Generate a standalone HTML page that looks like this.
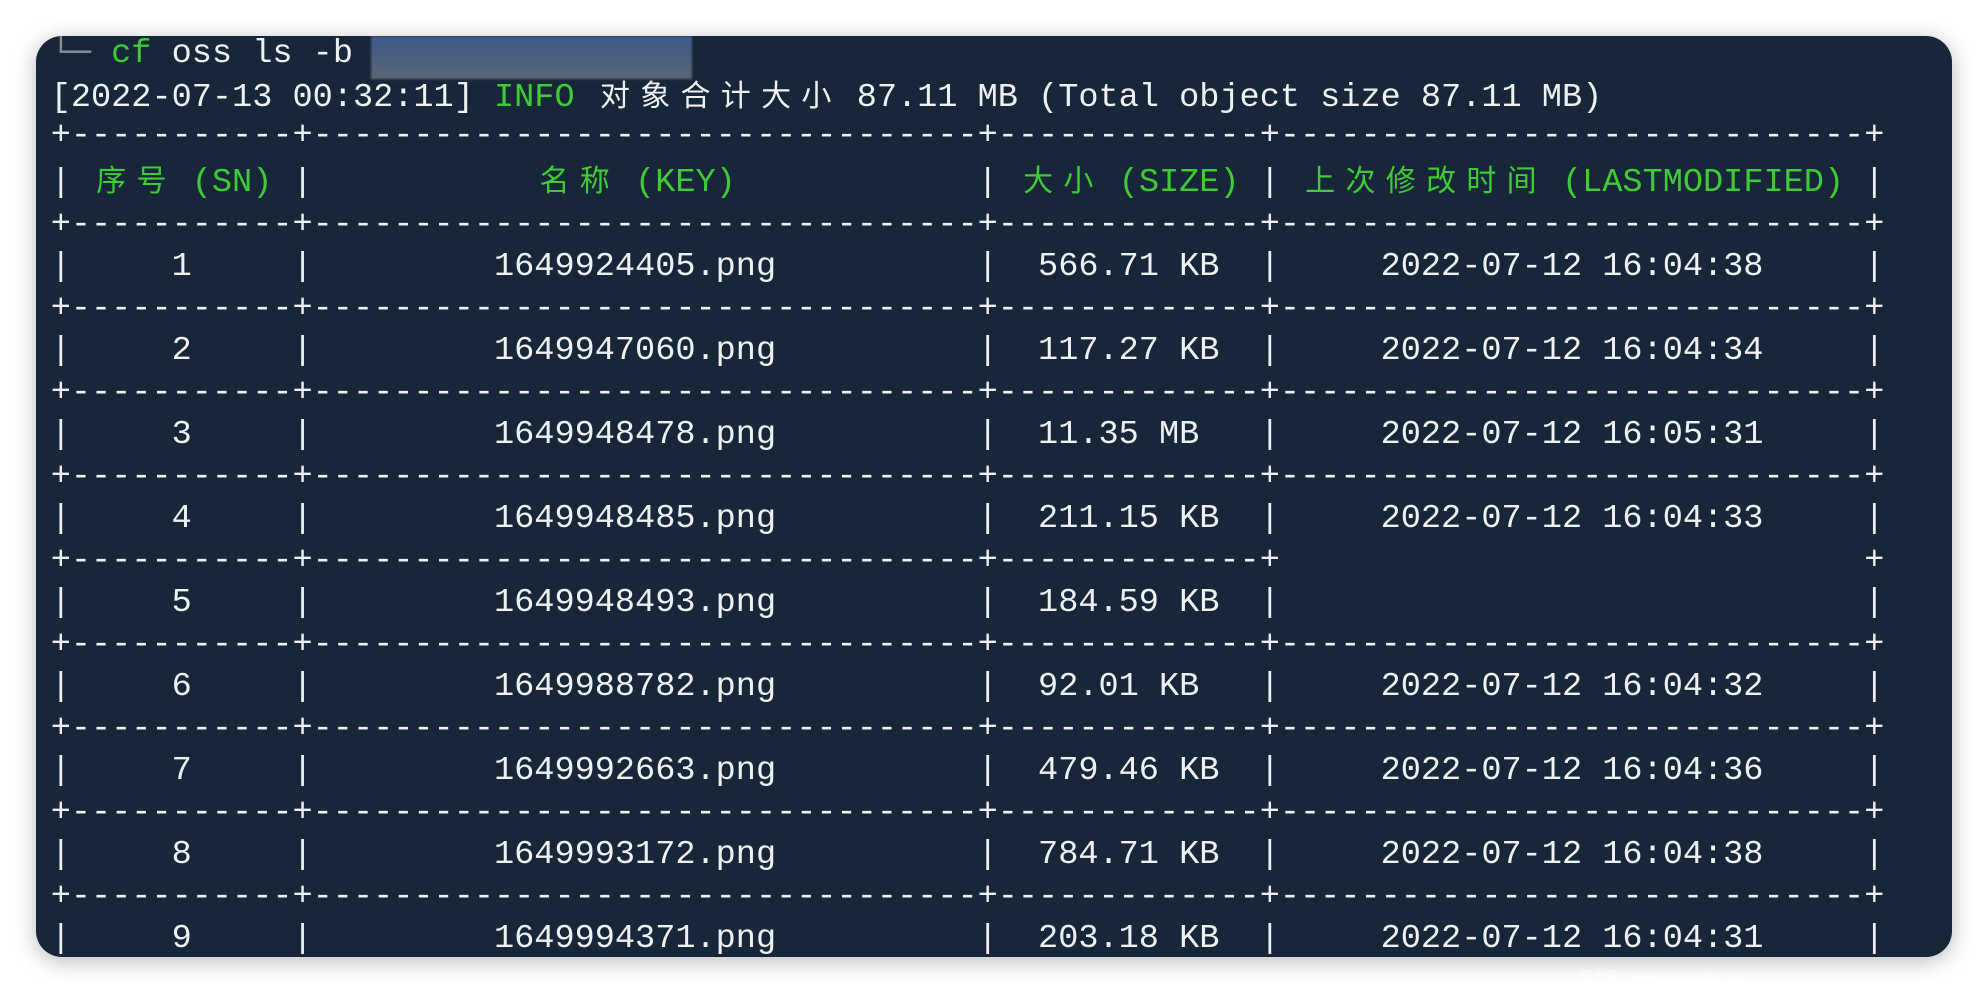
<!DOCTYPE html>
<html><head><meta charset="utf-8"><style>
html,body{margin:0;padding:0;width:1988px;height:994px;background:#fff;overflow:hidden}
.panel{position:absolute;left:36px;top:36px;width:1916px;height:921px;background:#172638;border-radius:26px;box-shadow:0 4px 22px rgba(0,0,0,0.28);overflow:hidden}
pre{position:absolute;left:14.7px;top:-10px;margin:0;font-family:"Liberation Mono","Noto Sans CJK SC",monospace;font-size:33.6px;line-height:42px;color:#eef0f2;white-space:pre}
.c{display:inline-block;width:40.3px;text-align:center;font-family:"Noto Sans CJK SC","WenQuanYi Zen Hei",sans-serif;font-size:30px}
.g{color:#3fcb35}
.d{color:#8a8f96}
.l0{position:relative;top:7px}
.l1{position:relative;top:4px}
.blur{position:absolute;left:335px;top:0;width:321px;height:43px;background:linear-gradient(180deg,#3c5a8c 0%,#4a5f7e 50%,#5b6574 100%);filter:blur(1px)}
.wm{position:absolute;left:1580px;top:966px;font-family:"Liberation Sans","Noto Sans CJK SC",sans-serif;font-size:13px;color:#fff;opacity:0.8}
</style></head><body>
<div class="panel">
<pre><span class="l0"><span class="d">└─</span> <span class="g">cf</span> oss ls -b </span>
<span class="l1">[2022-07-13 00:32:11] <span class="g">INFO</span> <span class="c">对</span><span class="c">象</span><span class="c">合</span><span class="c">计</span><span class="c">大</span><span class="c">小</span> 87.11 MB (Total object size 87.11 MB)</span>
+-----------+---------------------------------+-------------+-----------------------------+
| <span class="g"><span class="c">序</span><span class="c">号</span> (SN)</span> |           <span class="g"><span class="c">名</span><span class="c">称</span> (KEY)</span>            | <span class="g"><span class="c">大</span><span class="c">小</span> (SIZE)</span> | <span class="g"><span class="c">上</span><span class="c">次</span><span class="c">修</span><span class="c">改</span><span class="c">时</span><span class="c">间</span> (LASTMODIFIED)</span> |
+-----------+---------------------------------+-------------+-----------------------------+
|     1     |         1649924405.png          |  566.71 KB  |     2022-07-12 16:04:38     |
+-----------+---------------------------------+-------------+-----------------------------+
|     2     |         1649947060.png          |  117.27 KB  |     2022-07-12 16:04:34     |
+-----------+---------------------------------+-------------+-----------------------------+
|     3     |         1649948478.png          |  11.35 MB   |     2022-07-12 16:05:31     |
+-----------+---------------------------------+-------------+-----------------------------+
|     4     |         1649948485.png          |  211.15 KB  |     2022-07-12 16:04:33     |
+-----------+---------------------------------+-------------+                             +
|     5     |         1649948493.png          |  184.59 KB  |                             |
+-----------+---------------------------------+-------------+-----------------------------+
|     6     |         1649988782.png          |  92.01 KB   |     2022-07-12 16:04:32     |
+-----------+---------------------------------+-------------+-----------------------------+
|     7     |         1649992663.png          |  479.46 KB  |     2022-07-12 16:04:36     |
+-----------+---------------------------------+-------------+-----------------------------+
|     8     |         1649993172.png          |  784.71 KB  |     2022-07-12 16:04:38     |
+-----------+---------------------------------+-------------+-----------------------------+
|     9     |         1649994371.png          |  203.18 KB  |     2022-07-12 16:04:31     |
</pre>
<div class="blur"></div>
</div>
<div class="wm">安全客 ( www.anquanke.com )</div>
</body></html>
